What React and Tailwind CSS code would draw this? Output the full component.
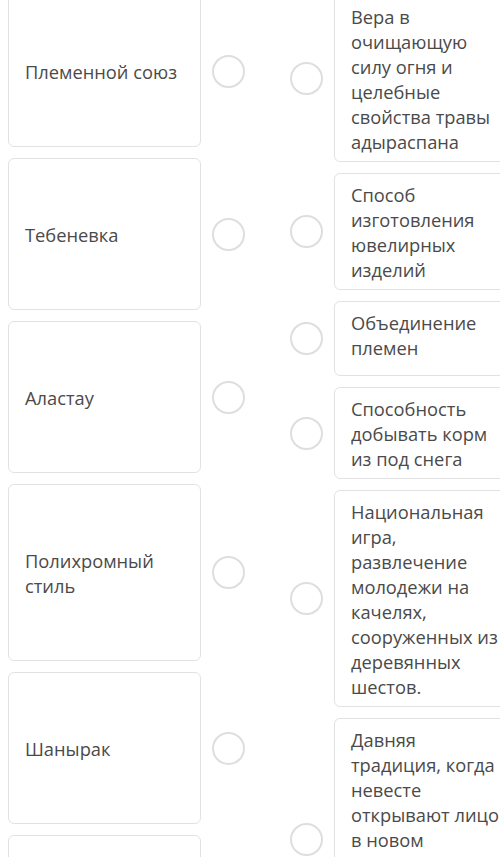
import React from "react";

const terms = [
  "Племенной союз",
  "Тебеневка",
  "Аластау",
  "Полихромный стиль",
  "Шанырак",
  "Беташар",
];

const meanings = [
  "Вера в очищающую силу огня и целебные свойства травы адыраспана",
  "Способ изготовления ювелирных изделий",
  "Объединение племен",
  "Способность добывать корм из под снега",
  "Национальная игра, развлечение молодежи на качелях, сооруженных из деревянных шестов.",
  "Давняя традиция, когда невесте открывают лицо в новом семействе и знакомят её с родственниками мужа и гостями.",
];

function Radio() {
  return (
    <span className="block w-[33px] h-[33px] shrink-0 rounded-full border-2 border-[#dedede] bg-white" />
  );
}

function App() {
  return (
    <div
      className="w-[500px] h-[857px] overflow-hidden bg-white text-[18.3px] leading-[25px] text-[#4a4a4a]"
      style={{ fontFamily: '"Open Sans", "Noto Sans", sans-serif' }}
    >
      <div className="flex items-start">
        {/* left column: terms */}
        <div className="flex flex-col gap-[11px] pl-2 -mt-[5px] shrink-0">
          {terms.map((t) => (
            <div key={t} className="flex items-center">
              <div className="w-[193px] rounded-md border border-[#e2e2e2] bg-white px-4 py-[62.5px]">
                {t}
              </div>
              <div className="ml-[11px]">
                <Radio />
              </div>
            </div>
          ))}
        </div>

        {/* right column: definitions */}
        <div className="flex flex-col gap-[11px] ml-[45px] -mt-[5px] shrink-0">
          {meanings.map((m) => (
            <div key={m} className="flex items-center">
              <Radio />
              <div className="ml-[11px] w-[188px] min-h-[75px] rounded-md border border-[#e2e2e2] bg-white px-4 py-[7.5px]">
                {m}
              </div>
            </div>
          ))}
        </div>
      </div>
    </div>
  );
}

export default App;
